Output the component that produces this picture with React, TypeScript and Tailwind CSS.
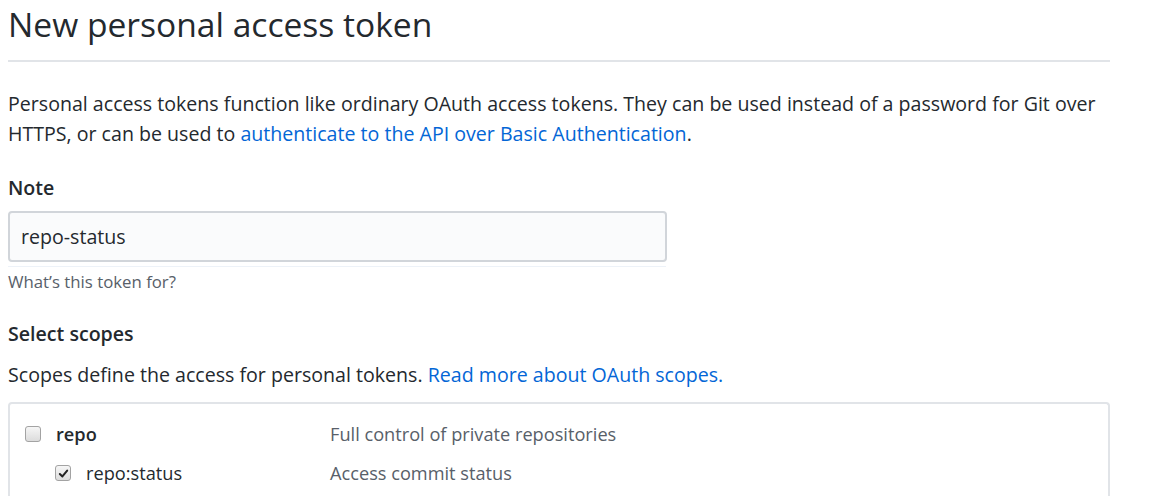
import { useState } from 'react';

const font = { fontFamily: '"Open Sans", "Noto Sans", Arial, sans-serif' };

function Checkbox({ checked, onChange }: { checked: boolean; onChange: () => void }) {
  return (
    <button
      type="button"
      onClick={onChange}
      className="flex h-[16px] w-[16px] shrink-0 items-center justify-center rounded-[3px] border border-[#a3a3a3] bg-[linear-gradient(#f6f6f6,#dcdcdc)]"
    >
      {checked && (
        <svg viewBox="0 0 12 12" className="h-[11px] w-[11px]">
          <path d="M2 6.5 L4.8 9.2 L10 2.8" fill="none" stroke="#222" strokeWidth="2.2" strokeLinecap="round" strokeLinejoin="round" />
        </svg>
      )}
    </button>
  );
}

export default function App() {
  const [note, setNote] = useState('repo-status');
  const [repo, setRepo] = useState(false);
  const [status, setStatus] = useState(true);

  return (
    <div className="min-h-screen bg-white px-[8px] text-[#24292e]" style={font}>
      <div className="w-[1102px]">
        <h1 className="pt-[2px] pb-[14px] text-[33.6px] leading-[44px] font-normal">New personal access token</h1>
        <div className="h-[2px] bg-[#e1e4e8]" />

        <p className="mt-[27px] text-[19.6px] leading-[30px]">
          Personal access tokens function like ordinary OAuth access tokens. They can be used instead of a password for Git over
          HTTPS, or can be used to{' '}
          <a href="#" className="text-[#0366d6]">authenticate to the API over Basic Authentication</a>.
        </p>

        <label className="mt-[24px] block text-[19.6px] leading-[30px] font-semibold">Note</label>
        <input
          value={note}
          onChange={e => setNote(e.target.value)}
          className="mt-[8px] block h-[51px] w-[659px] rounded-[4px] border-2 border-[#d1d5da] bg-[#fafbfc] px-[11px] text-[19.6px] text-[#24292e] outline-none"
        />
        <div className="mt-[4px] h-px w-[658px] bg-[#edf2f8]" />
        <p className="mt-[4px] text-[16.8px] leading-[22px] text-[#586069]">What’s this token for?</p>

        <h3 className="mt-[26px] text-[19.6px] leading-[30px] font-semibold">Select scopes</h3>
        <p className="mt-[11px] text-[19.6px] leading-[30px]">
          Scopes define the access for personal tokens.{' '}
          <a href="#" className="text-[#0366d6]">Read more about OAuth scopes.</a>
        </p>

        <div className="mt-[12px] rounded-t-[4px] border-2 border-b-0 border-[#e1e4e8] pt-[17px] pb-[10px]">
          <div className="flex items-center">
            <div className="flex w-[320px] items-center gap-[15px] pl-[15px]">
              <Checkbox checked={repo} onChange={() => setRepo(!repo)} />
              <span className="text-[18.2px] leading-[26px] font-semibold">repo</span>
            </div>
            <span className="text-[18.2px] leading-[26px] text-[#586069]">Full control of private repositories</span>
          </div>
          <div className="mt-[13px] flex items-center">
            <div className="flex w-[320px] items-center gap-[15px] pl-[45px]">
              <Checkbox checked={status} onChange={() => setStatus(!status)} />
              <span className="text-[18.2px] leading-[26px]">repo:status</span>
            </div>
            <span className="text-[18.2px] leading-[26px] text-[#586069]">Access commit status</span>
          </div>
        </div>
      </div>
    </div>
  );
}
